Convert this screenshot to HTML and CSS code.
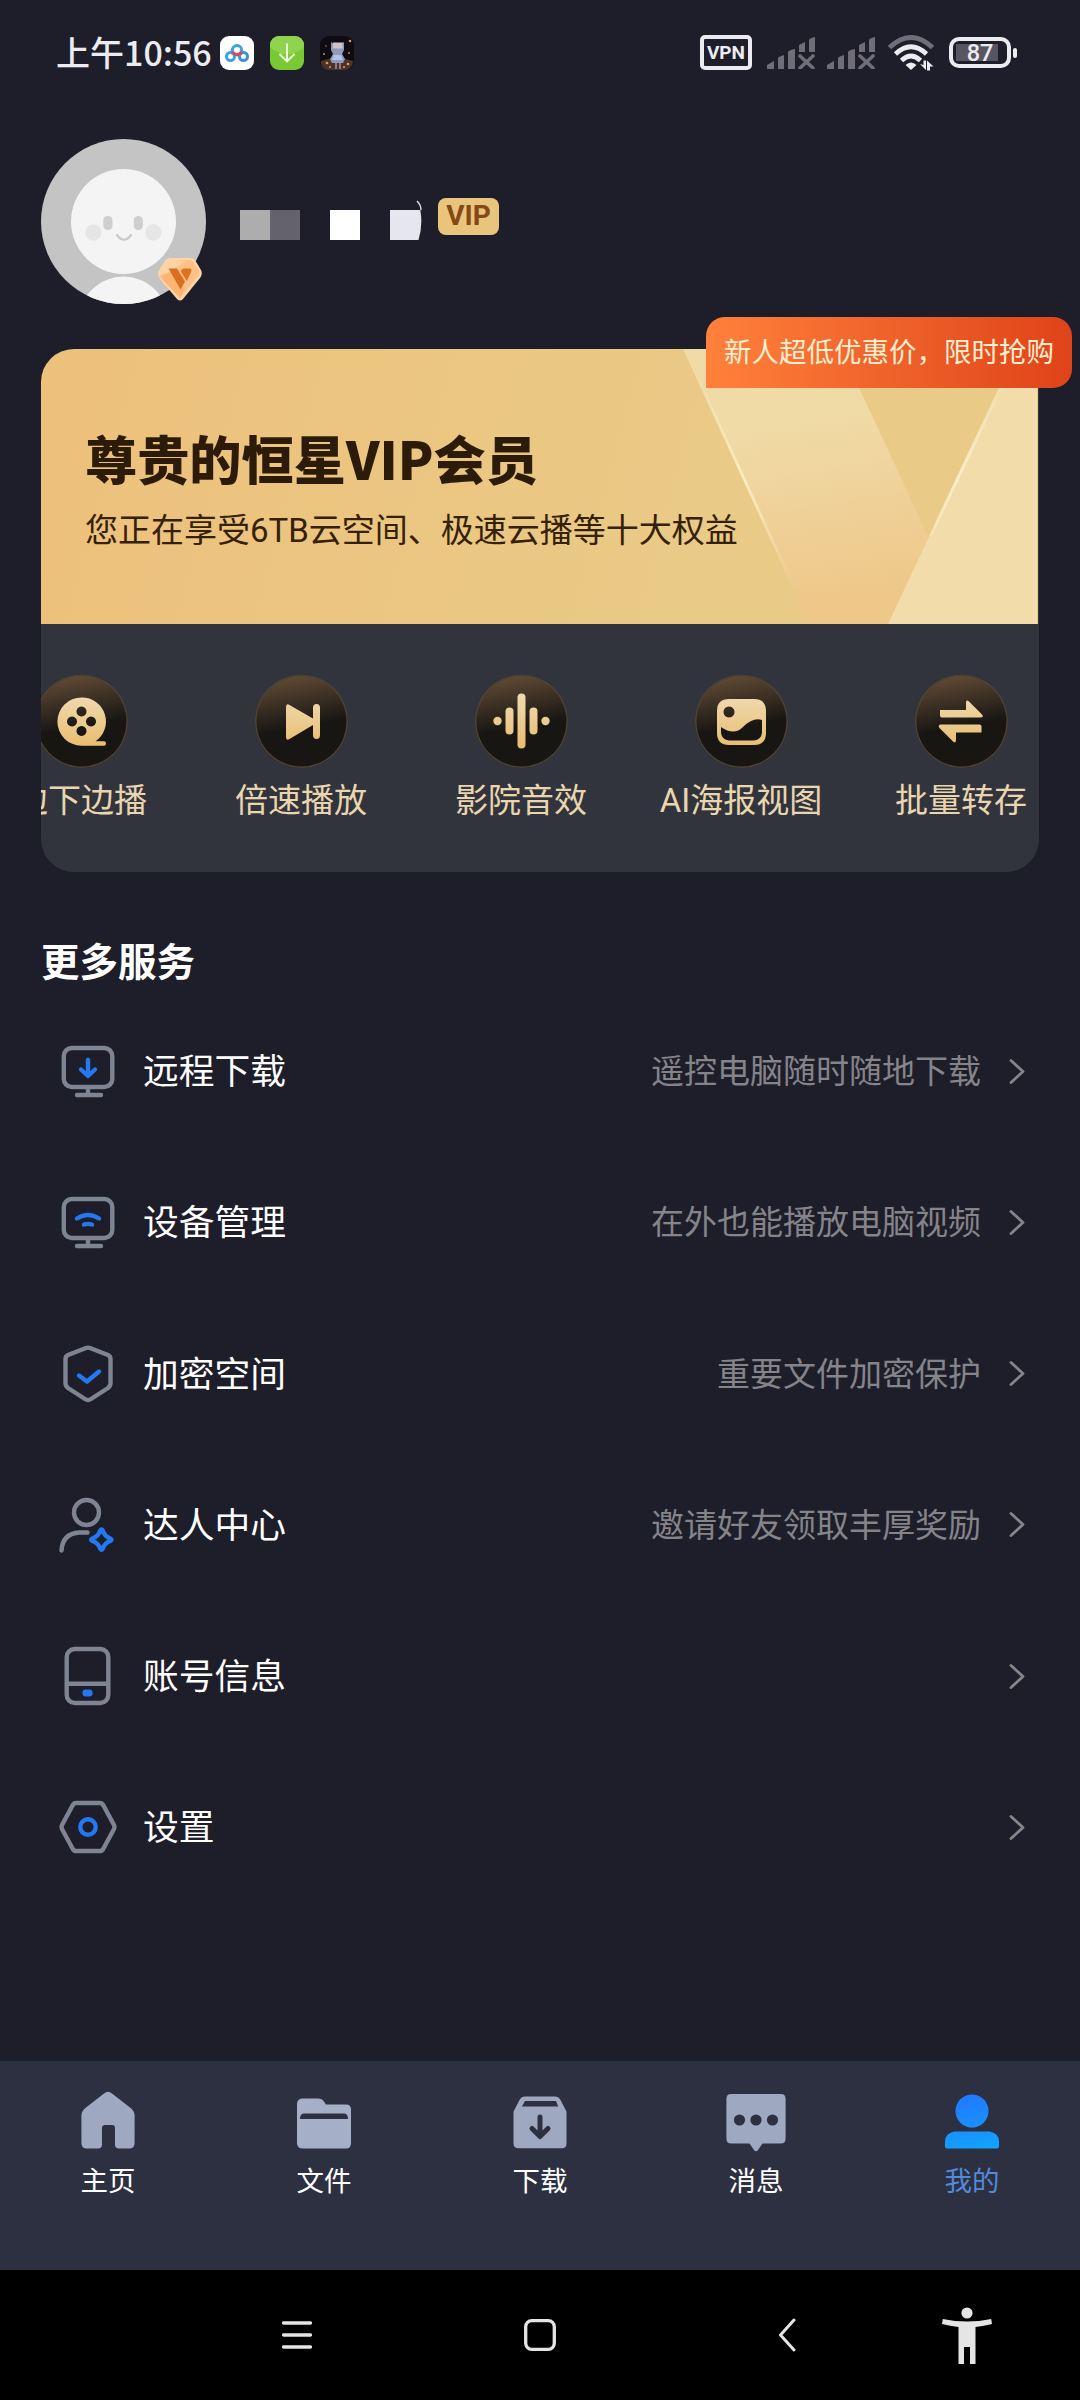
FILE: index.html
```html
<!DOCTYPE html>
<html lang="zh-CN">
<head>
<meta charset="utf-8">
<title>我的</title>
<link rel="stylesheet" href="styles.css">
</head>
<body>
<div class="phone">
  <header class="status">
    <span class="clock">上午10:56</span>
    <div class="status-apps">
      <svg width="34" height="34" viewBox="0 0 34 34"><rect width="34" height="34" rx="9" fill="#fff"/><g fill="none" stroke-width="3"><circle cx="10.500" cy="20.500" r="4" stroke="#3aa3e3"/><circle cx="23.500" cy="20.500" r="4" stroke="#3593d8"/><circle cx="17" cy="14.300" r="4.700" stroke="#36a4e0"/><path d="M12.600 15.500a4.700 4.700 0 0 0 8.800 0M13.500 17l-1 1.500M20.500 17l1 1.500" stroke="#e0465c"/></g></svg>
      <svg width="34" height="34" viewBox="0 0 34 34"><rect width="34" height="34" rx="9" fill="#79c935"/><path d="M0 9a9 9 0 0 1 9-9h16a9 9 0 0 1 9 9v2Q17 26 0 11z" fill="#8ed44f"/><path d="M17 7.500v17.500M9.500 18l7.500 7.500 7.500-7.500" fill="none" stroke="#f4ffe8" stroke-width="1.800"/></svg>
      <svg width="34" height="34" viewBox="0 0 34 34"><rect width="34" height="34" rx="9" fill="#0e0b12"/><path d="M1 25q16-6 32 0v2q-2 7-9 7H9q-7 0-8-7z" fill="#4b3329"/><path d="M11 6l3 2h6l4-2v8l-2 4 3 5-2 4H12l-2-4 3-5-2-4z" fill="#8d9abb"/><path d="M13 6.500h9.500v6H13z" fill="#cfc3c6"/><path d="M14 19h7l2 5H12z" fill="#afc5e8"/><path d="M15 27h2v6h-2zM19 27h2v6h-2z" fill="#927a86"/><g fill="#dd9a57"><circle cx="30" cy="5" r="1.300"/><circle cx="4" cy="18" r=".9"/><circle cx="29" cy="17" r=".9"/><circle cx="6" cy="10" r=".7"/><circle cx="7" cy="27" r="1.300"/><circle cx="28" cy="28" r="1.300"/><circle cx="24" cy="31" r="1"/><circle cx="10" cy="31" r="1"/></g></svg>
    </div>
    <div class="status-system">
      <span class="vpn">VPN</span>
      <svg class="signal" width="48" height="32" viewBox="0 0 48 32"><path id="bars" fill="#6f6e78" d="M0 32v-4l7-4v8zM11 32V21q0-1 6-3v14zM21 32V15q1-2 7-3v20zM32 15V8l6-3v10zM42 15V3q1-2 6-3v15z"/><path d="M33 19l13 12M46 19l-13 12" stroke="#6f6e78" stroke-width="3.600" stroke-linecap="round"/></svg>
      <svg class="signal" width="48" height="32" viewBox="0 0 48 32"><use href="#bars"/><path d="M33 19l13 12M46 19l-13 12" stroke="#6f6e78" stroke-width="3.600" stroke-linecap="round"/></svg>
      <svg class="wifi" width="46" height="36" viewBox="0 0 46 36"><g fill="none" stroke-width="4.800"><path d="M1.500 12.500q21.500-20 43 0" stroke="#6f6e78"/><path d="M7.500 19q15.500-14.500 31 0M13.500 25.500q9.500-9 19 0" stroke="#ececf0"/></g><path d="M17.500 30q5.500-5 11 0l-5.500 5z" fill="#ececf0"/><path d="M32 29l6 6v-9.500h-2.500v4.500zM39 35.500V25.500l6.500 6h-3.500v4z" fill="#ececf0"/></svg>
      <div class="battery"><span>87</span></div><i class="battery-tip"></i>
    </div>
  </header>

  <main class="content">
    <section class="profile">
      <div class="avatar">
        <svg width="165" height="165" viewBox="0 0 165 165"><defs><clipPath id="round"><circle cx="82.500" cy="82.500" r="82.500"/></clipPath></defs><g clip-path="url(#round)"><rect width="165" height="165" fill="#c4c4c4"/><circle cx="82.500" cy="82.500" r="52.500" fill="#f4f4f4"/><circle cx="82.500" cy="182" r="44.500" fill="#f4f4f4"/></g><rect x="62.300" y="77" width="9.200" height="14" rx="4.400" fill="#cfcfcf"/><rect x="92.700" y="77" width="9.200" height="14" rx="4.400" fill="#cfcfcf"/><circle cx="52.300" cy="93.500" r="8.200" fill="#e6e6e6"/><circle cx="112.300" cy="93.500" r="8.200" fill="#e6e6e6"/><path d="M76 96q7 9.500 14 0" fill="none" stroke="#c9c9c9" stroke-width="2.200" stroke-linecap="round"/></svg>
        <svg class="avatar-badge" width="44" height="43" viewBox="0 0 44 43"><path d="M12 0h20q3 0 5 2l6 10q2 4-1 8L25 41q-3 3-6 0L2 21q-3-4-1-9L7 3q2-3 5-3z" fill="#ffd4a5"/><path d="M12 2h20q2 0 3 2l6 9q1 3-1 5L22 40 3 20l25-17z" fill="#ffc187"/><path d="M1.500 18L14 13l12 19-4 8z" fill="#ffb06a" opacity=".75"/><path d="M10.500 10.500h8.500l8 13-4.500 8z" fill="#d9701f"/><path d="M23 14q0-3.500 3-3.500h5.500q3 0 1.500 3.500l-4 9z" fill="#de731e"/></svg>
      </div>
      <div class="nickname">
        <svg width="182" height="42" viewBox="0 0 182 42"><path d="M0 10h30v30H0z" fill="#adadad"/><path d="M30 10h30v30H30z" fill="#64636d"/><path d="M90 10h30v30H90z" fill="#fff"/><path d="M150 10h30.300Q183 25 178.500 40H150z" fill="#e6e6ee"/><path d="M177 1q4 4 4 9" fill="none" stroke="#d8d8df" stroke-width="1.500"/></svg>
      </div>
      <span class="vip-tag">VIP</span>
    </section>

    <section class="vip-card">
      <div class="vip-body">
        <div class="vip-hero">
          <svg class="vip-art" width="996" height="275" viewBox="0 0 996 275"><defs><linearGradient id="band" x1="0" y1="0" x2=".15" y2="1"><stop offset=".3" stop-color="#f0dba7"/><stop offset="1" stop-color="#eec789"/></linearGradient><linearGradient id="glint" x1="0" y1="0" x2="0" y2="1"><stop offset="0" stop-color="#fff3d2" stop-opacity="0"/><stop offset=".5" stop-color="#fff3d2" stop-opacity=".75"/><stop offset="1" stop-color="#fff3d2" stop-opacity="0"/></linearGradient></defs><path d="M642 0h158l87.500 188L847 275h-79z" fill="url(#band)"/><path d="M976 0h21v275H847z" fill="#f1dcaa"/><path d="M654 26l94 205h3L657 26zM961 32L888 187h3L965 32z" fill="url(#glint)"/></svg>
          <h1>尊贵的恒星VIP会员</h1>
          <p>您正在享受6TB云空间、极速云播等十大权益</p>
        </div>
        <div class="perks">
          <div class="perk"><div class="perk-icon"><svg width="93" height="93" viewBox="0 0 93 93"><defs><linearGradient id="gold" gradientUnits="userSpaceOnUse" x1="0" y1="20" x2="0" y2="72"><stop offset="0" stop-color="#f0dab2"/><stop offset="1" stop-color="#e8bd6e"/></linearGradient></defs><path fill="url(#gold)" fill-rule="evenodd" d="M46.500 22.500a24 24 0 0 1 14 43.800h8.500q2 0 2 2.200t-2 2.200H46.500a24 24 0 0 1 0-48.200zM46.500 31.500a5 5 0 1 0 .01 0zM37 41.500a5 5 0 1 0 .01 0zM56 41.500a5 5 0 1 0 .01 0zM46.500 51a5 5 0 1 0 .01 0z"/></svg></div><span>边下边播</span></div>
          <div class="perk"><div class="perk-icon"><svg width="93" height="93" viewBox="0 0 93 93"><path fill="url(#gold)" d="M31 32q0-4 3.500-2L58 43.500V33q0-4 3.500-4T65 33v27q0 4-3.500 4T58 60V50L34.500 64q-3.500 2-3.500-2z"/></svg></div><span>倍速播放</span></div>
          <div class="perk"><div class="perk-icon"><svg width="93" height="93" viewBox="0 0 93 93"><g fill="url(#gold)"><circle cx="22.500" cy="46" r="4.200"/><rect x="30.500" y="32.500" width="8" height="27" rx="4"/><rect x="42.500" y="18.500" width="8" height="55" rx="4"/><rect x="54.500" y="32.500" width="8" height="27" rx="4"/><circle cx="70.500" cy="46" r="4.200"/></g></svg></div><span>影院音效</span></div>
          <div class="perk"><div class="perk-icon"><svg width="93" height="93" viewBox="0 0 93 93"><path fill="url(#gold)" fill-rule="evenodd" d="M34 24h25q12 0 12 12v22q0 12-12 12H34q-12 0-12-12V36q0-12 12-12zM34 31.500a5.500 5.500 0 1 0 .01 0zM26 52v6q1 7 8 7.500h25q7-.5 8-7.500V45q-9-3-19 7-9 9-22 0z"/></svg></div><span>AI海报视图</span></div>
          <div class="perk"><div class="perk-icon"><svg width="93" height="93" viewBox="0 0 93 93"><path fill="url(#gold)" d="M25 35h26v-7q0-4 3-1.500L66.500 39q3 3-.5 3.500H27q-2 0-2-2zM66.500 57.500H41v7.500q0 4-3 1.500L24.500 53q-2-3 1-3.500h39q2 0 2 2z"/></svg></div><span>批量转存</span></div>
        </div>
      </div>
      <div class="promo">新人超低优惠价，限时抢购</div>
    </section>

    <section class="services">
      <h2>更多服务</h2>
      <ul>
        <li><svg class="row-icon" viewBox="0 0 66 66"><g class="gray"><rect x="8.800" y="10" width="48.500" height="39" rx="8"/><path d="M33 49v7M22 57h24"/></g><path class="blue" d="M33 22v15M26 31.500l7 6.500 7-6.500"/></svg><span class="label">远程下载</span><span class="hint">遥控电脑随时随地下载</span><svg class="chevron" viewBox="0 0 16 25"><path d="M2 1.500l12 11-12 11"/></svg></li>
        <li><svg class="row-icon" viewBox="0 0 66 66"><g class="gray"><rect x="8.800" y="10" width="48.500" height="39" rx="8"/><path d="M33 49v7M22 57h24"/></g><path class="blue" d="M22 29.500q11-7 22 0M29 35.500q4-1.300 8 0"/></svg><span class="label">设备管理</span><span class="hint">在外也能播放电脑视频</span><svg class="chevron" viewBox="0 0 16 25"><path d="M2 1.500l12 11-12 11"/></svg></li>
        <li><svg class="row-icon" viewBox="0 0 66 66"><path class="gray" d="M31 7q2-.8 4 0l18 7q2.500 1 2.500 4v24q0 3-2.500 5L36 58q-3 2-6 0L13 47q-2.500-2-2.500-5V18q0-3 2.500-4z"/><path class="blue" d="M24 34.500l8 6L44 30.500"/></svg><span class="label">加密空间</span><span class="hint">重要文件加密保护</span><svg class="chevron" viewBox="0 0 16 25"><path d="M2 1.500l12 11-12 11"/></svg></li>
        <li><svg class="row-icon" viewBox="0 0 66 66"><g class="gray"><circle cx="31.500" cy="20.500" r="12.500"/><path d="M6.500 58.500q1-17 18-18h8"/></g><path class="blue" d="M45.300 38.500q1.200-2 2.400 0 2 6 7.600 8 2.500 1.200 0 2.400-5.600 2-7.600 8-1.200 2-2.400 0-2-6-8-8-2.500-1.200 0-2.400 6-2 8-8z"/></svg><span class="label">达人中心</span><span class="hint">邀请好友领取丰厚奖励</span><svg class="chevron" viewBox="0 0 16 25"><path d="M2 1.500l12 11-12 11"/></svg></li>
        <li><svg class="row-icon" viewBox="0 0 66 66"><g class="gray"><rect x="11.700" y="6" width="41.600" height="54" rx="8"/><path d="M12 40.700h41"/></g><rect x="27.500" y="46.500" width="10" height="7" rx="3" fill="#2479f2"/></svg><span class="label">账号信息</span><svg class="chevron" viewBox="0 0 16 25"><path d="M2 1.500l12 11-12 11"/></svg></li>
        <li><svg class="row-icon" viewBox="0 0 66 66"><path class="gray" d="M21 9h24q2 0 3.200 2L59 31q1 2 0 4L48.200 55q-1.200 2-3.200 2H21q-2 0-3.200-2L7 35q-1-2 0-4l10.800-20q1.200-2 3.200-2z"/><circle class="blue" cx="33" cy="33" r="7.700"/></svg><span class="label">设置</span><svg class="chevron" viewBox="0 0 16 25"><path d="M2 1.500l12 11-12 11"/></svg></li>
      </ul>
    </section>
  </main>

  <nav class="tabs">
    <a class="tab"><svg viewBox="0 0 64 64"><path fill="#9ea8c0" d="M28 5.500q4-3.500 8 0l18 14q4.600 3.500 4.600 8V55q0 5.500-5.500 5.500H43q-4 0-4-4V40q0-3-3-3h-7q-3 0-3 3v16.500q0 4-4 4H11q-5.600 0-5.600-5.500V27.500q0-4.500 4.600-8z"/></svg><span>主页</span></a>
    <a class="tab"><svg viewBox="0 0 64 64"><path fill="#a5afc8" fill-rule="evenodd" d="M11 10.500h15q4 0 6 3l1.800 3H54q5 0 5 5V55q0 5.500-5 5.500H11q-6 0-6-5.500V16q0-5.500 6-5.500zM8 31h48q0-5.500-4-5.500H12q-4 0-4 5.500z"/></svg><span>文件</span></a>
    <a class="tab"><svg viewBox="0 0 64 64"><path fill="#9ea8c0" fill-rule="evenodd" d="M17 8.500h30q3.500 0 5.200 3l6.300 12v32q0 4.800-4.500 4.800H10.500q-5 0-5-4.800v-32l6.300-12q1.700-3 5.200-3zM17 13q-2 4-3.200 5.500h36.400L48 13z"/><path d="M32 29v19M24 40.500l8 8 8-8" fill="none" stroke="#2d3041" stroke-width="5" stroke-linecap="round" stroke-linejoin="round"/></svg><span>下载</span></a>
    <a class="tab"><svg viewBox="0 0 64 64"><path fill="#9ea8c0" d="M7 6h50q4.600 0 4.600 5v39.500q0 5-4.600 5H38.500L34 62q-2 2.500-4 0l-4.500-6.500H7q-4.600 0-4.600-5V11q0-5 4.600-5z"/><g fill="#2d3041"><circle cx="15.500" cy="32" r="5.600"/><circle cx="32" cy="32" r="5.600"/><circle cx="48.500" cy="32" r="5.600"/></g></svg><span>消息</span></a>
    <a class="tab active"><svg viewBox="0 0 64 64"><defs><linearGradient id="me" gradientUnits="userSpaceOnUse" x1="26" y1="7" x2="38" y2="61"><stop offset="0" stop-color="#2079ff"/><stop offset="1" stop-color="#13a1ff"/></linearGradient></defs><path fill="url(#me)" d="M32 6.500a16.500 16.500 0 1 1-.01 0zM14 43.500h36q9 2 9 10v5q0 2-2 2H7q-2 0-2-2v-5q0-8 9-10z"/></svg><span>我的</span></a>
  </nav>

  <footer class="system-nav">
    <svg width="30" height="28" viewBox="0 0 30 28"><path d="M1.500 2h27M1.500 14h27M1.500 26h27" stroke="#e5e5e5" stroke-width="3.300" stroke-linecap="round"/></svg>
    <svg width="32" height="32" viewBox="0 0 32 32"><rect x="1.700" y="1.700" width="28.600" height="28.600" rx="6" fill="none" stroke="#e5e5e5" stroke-width="3.300"/></svg>
    <svg width="18" height="34" viewBox="0 0 18 34"><path d="M16 2L2.500 17 16 32" fill="none" stroke="#e5e5e5" stroke-width="3" stroke-linecap="round" stroke-linejoin="round"/></svg>
    <svg width="50" height="57" viewBox="0 0 50 57"><g fill="#e5e5e5"><circle cx="25" cy="6" r="5.600"/><path d="M.8 12q24.200 5 48.400 0L50 17q-8 2-16.500 3v37H28V40h-6v17h-5.500V20Q8 19 0 17z"/></g></svg>
  </footer>
</div>
</body>
</html>
```
FILE: styles.css
```css
* { box-sizing: border-box; margin: 0; padding: 0; }

body {
  background: #1e1d2a;
  color: #fff;
  font-family: Roboto, "Noto Sans CJK SC", sans-serif;
}

svg { display: block; flex: none; }

.phone {
  width: 1080px;
  height: 2400px;
  display: flex;
  flex-direction: column;
  background: #1e1d2a;
}

/* Status bar */
.status {
  height: 105px;
  padding: 0 63px 0 56px;
  display: flex;
  align-items: center;
  flex: none;
}
.clock {
  width: 164px;
  padding-bottom: 2px;
  color: #ececf0;
  font: 500 34px/50px "Noto Sans CJK SC", sans-serif;
  white-space: nowrap;
}
.status-apps { display: flex; gap: 16px; }
.status-system { display: flex; align-items: center; margin-left: auto; }
.vpn {
  width: 52px;
  height: 35px;
  margin-right: 15px;
  border: 4px solid #ececf0;
  border-radius: 5px;
  color: #ececf0;
  font: 700 19px/27px Roboto, sans-serif;
  text-align: center;
}
.signal { margin-right: 12px; }
.wifi { margin: 1px 15px 0 1px; }
.battery {
  width: 62px;
  height: 31px;
  padding: 3px;
  border: 4px solid #ececf0;
  border-radius: 10px;
  background: linear-gradient(90deg, #565561 42px, transparent 42px) 3px 3px / 48px 17px no-repeat;
  color: #ececf0;
  font: 500 23.5px/18px Roboto, sans-serif;
  text-align: center;
}
.battery span { display: block; }
.battery-tip { width: 4px; height: 10px; margin-left: 2px; border-radius: 2px; background: #ececf0; }

.content { flex: 1; padding: 34px 41px 0; }

/* Profile */
.profile { display: flex; height: 165px; }
.avatar { position: relative; width: 165px; height: 165px; }
.avatar-badge { position: absolute; left: 117px; top: 119px; }
.nickname { margin: 61px 0 0 34px; }
.vip-tag {
  width: 61px;
  height: 37px;
  margin: 59px 0 0 16px;
  border-radius: 8px;
  background: #e9c47c;
  color: #844916;
  font: 700 28px/36px Roboto, sans-serif;
  text-align: center;
}

/* Membership card */
.vip-card { position: relative; margin-top: 45px; }
.vip-body { height: 523px; border-radius: 33px; overflow: hidden; background: #32343d; }
.vip-hero {
  position: relative;
  width: 997px;
  height: 275px;
  padding: 68px 44px 0;
  background: linear-gradient(105deg, #edc07b, #e9cb87 70%);
}
.vip-art { position: absolute; left: 0; top: 0; }
.vip-hero h1 {
  position: relative;
  height: 80px;
  color: #2c1b09;
  font: 900 52.2px/80px "Noto Sans CJK SC", sans-serif;
  white-space: nowrap;
}
.vip-hero p { position: relative; margin-top: 4px; color: #352107; font-size: 33px; line-height: 60px; white-space: nowrap; }
.perks { display: flex; margin-left: -70px; padding-top: 51px; }
.perk {
  width: 220px;
  flex: none;
  display: flex;
  flex-direction: column;
  align-items: center;
  color: #e9d6af;
  font-size: 33px;
  line-height: 48px;
}
.perk span { margin-top: 9px; }
.perk-icon {
  width: 93px;
  height: 93px;
  border-radius: 50%;
  background: linear-gradient(170deg, #6a5138 0, #181613 55%);
  box-shadow: inset 0 0 0 1.5px #4d4236;
}
.promo {
  position: absolute;
  left: 665px;
  top: -32px;
  width: 366px;
  height: 71px;
  border-radius: 19px 19px 19px 0;
  background: linear-gradient(90deg, #ff813b, #df4319);
  color: #ffeed0;
  font-size: 27.5px;
  line-height: 72px;
  text-align: center;
  white-space: nowrap;
}

/* Services */
.services h2 { margin-top: 61px; font-size: 38.5px; line-height: 60px; font-weight: 700; }
.services ul { margin-top: 2.5px; list-style: none; }
.services li { height: 151.25px; padding: 0 14px; display: flex; align-items: center; }
.row-icon { width: 66px; height: 66px; fill: none; }
.row-icon .gray, .row-icon .blue { stroke-width: 4.4; stroke-linecap: round; stroke-linejoin: round; }
.row-icon .gray { stroke: #7e8492; }
.row-icon .blue { stroke: #2479f2; }
.label { margin-left: 22px; padding-top: 2px; font-size: 35.75px; line-height: 54px; }
.hint { margin-left: auto; padding-top: 2px; color: #848489; font-size: 33px; line-height: 50px; }
.chevron { width: 16px; height: 25px; margin-left: 28px; fill: none; stroke: #85858c; stroke-width: 2.8; stroke-linecap: round; stroke-linejoin: round; }
.label + .chevron { margin-left: auto; }

/* Tab bar */
.tabs { height: 209px; display: flex; flex: none; background: #2d3041; }
.tab {
  flex: 1;
  padding-top: 27px;
  display: flex;
  flex-direction: column;
  align-items: center;
  font-size: 27.5px;
  line-height: 40px;
}
.tab svg { width: 64px; height: 64px; }
.tab span { margin-top: 10px; }
.tab.active { color: #5289dc; }

/* System navigation */
.system-nav { height: 130px; display: flex; align-items: center; flex: none; padding-left: 282px; background: #000; }
.system-nav svg:nth-child(2) { margin-left: 212px; }
.system-nav svg:nth-child(3) { margin-left: 222px; }
.system-nav svg:nth-child(4) { margin-left: 146px; }
```
